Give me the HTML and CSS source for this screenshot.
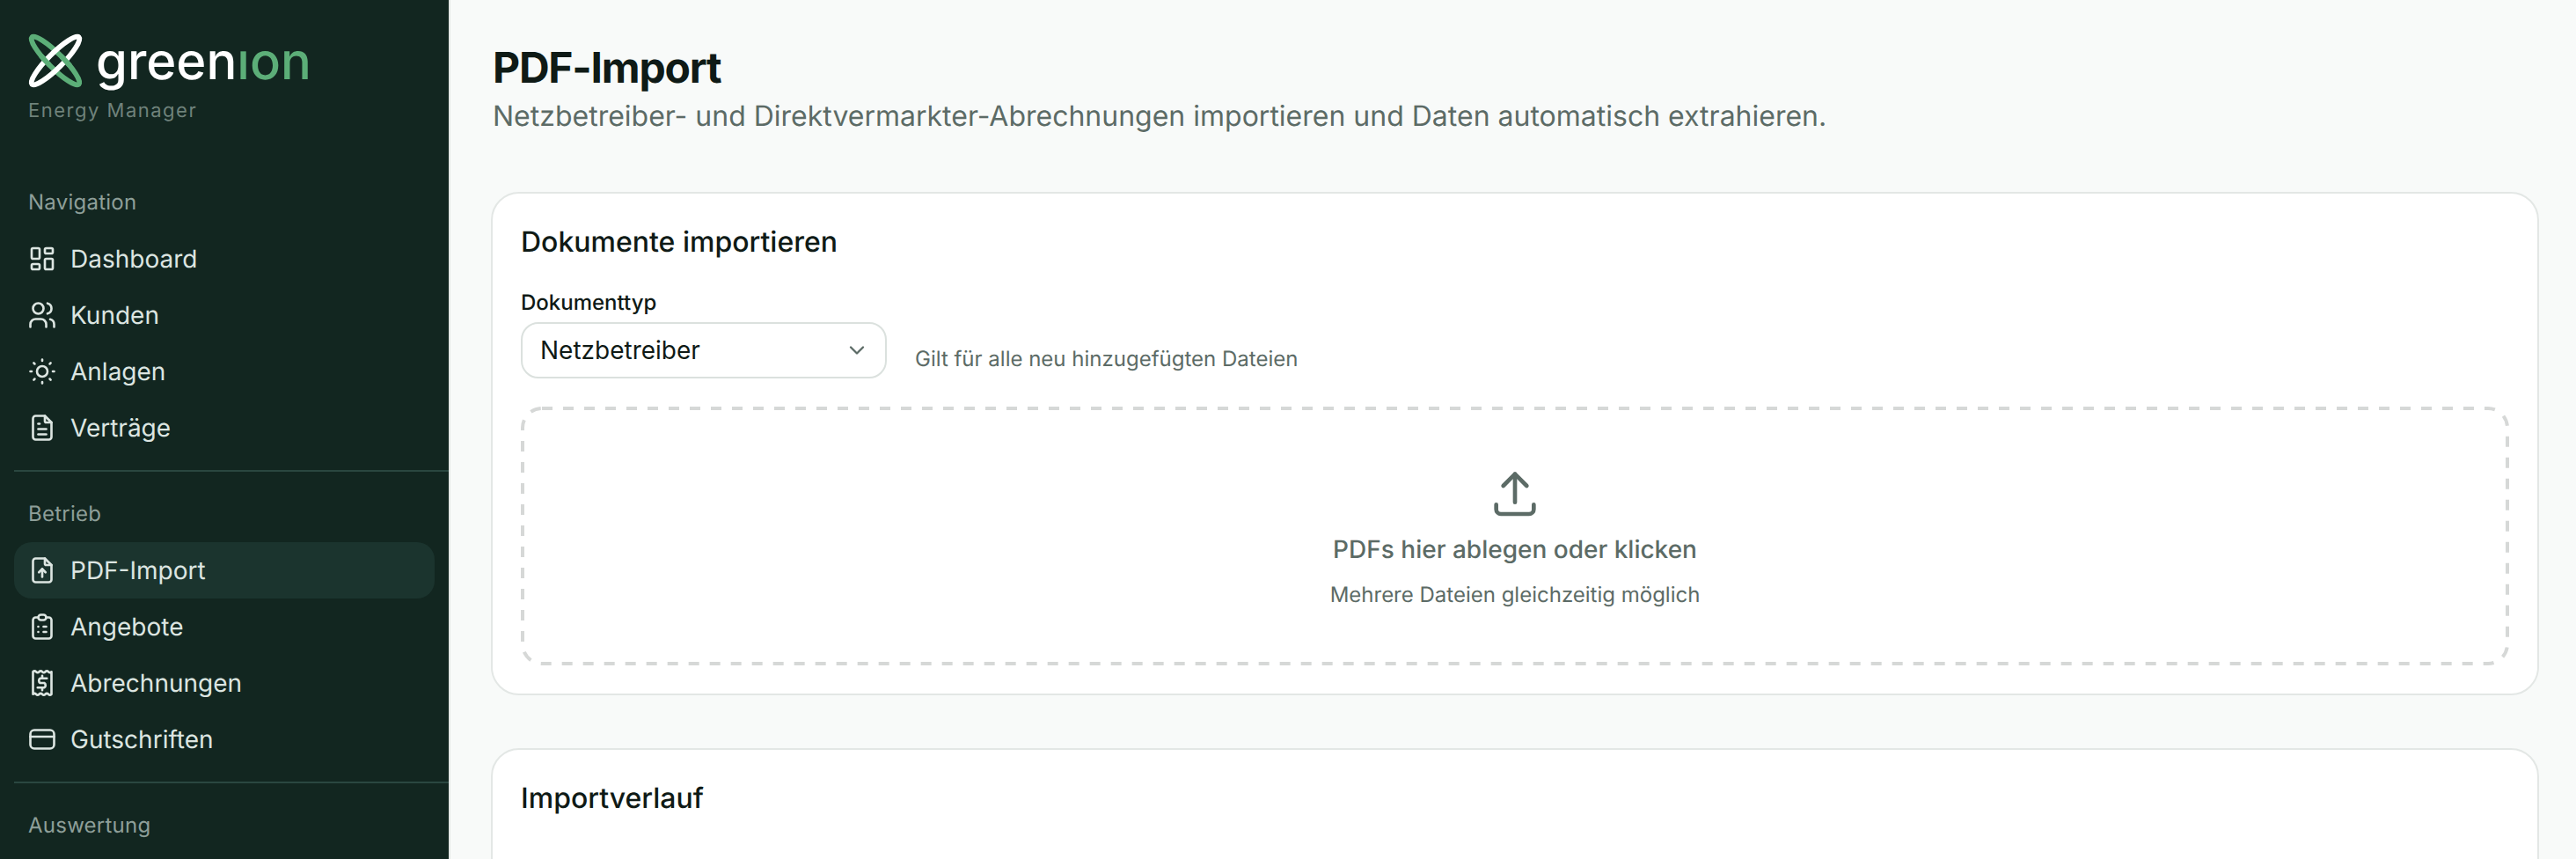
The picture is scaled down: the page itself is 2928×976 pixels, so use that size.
FILE: index.html
```html
<!DOCTYPE html>
<html lang="de">
<head>
<meta charset="utf-8">
<title>PDF-Import · greenion Energy Manager</title>
<link rel="stylesheet" href="styles.css">
</head>
<body>
<div class="app">
  <aside class="sidebar">
    <div class="brand">
      <div class="brand-row">
        <svg class="brand-mark" viewBox="0 0 64 64" fill="none" stroke-width="6">
          <defs>
            <clipPath id="weave"><rect x="12" y="24" width="15" height="16"/><rect x="37" y="24" width="15" height="16"/></clipPath>
          </defs>
          <ellipse cx="32" cy="32" rx="39" ry="8.500" transform="rotate(45 32 32)" stroke="#5cae78"/>
          <ellipse cx="32" cy="32" rx="39" ry="8.500" transform="rotate(-45 32 32)" stroke="#fff"/>
          <g clip-path="url(#weave)">
            <ellipse cx="32" cy="32" rx="39" ry="8.500" transform="rotate(45 32 32)" stroke="#5cae78"/>
          </g>
        </svg>
        <span class="brand-name">green<span class="brand-ion">ıon</span></span>
      </div>
      <div class="brand-sub">Energy Manager</div>
    </div>

    <p class="nav-label nav-label-first">Navigation</p>
    <nav class="nav-group">
      <a class="nav-item"><svg class="nav-icon" viewBox="0 0 24 24"><path d="M5 4h4a1 1 0 0 1 1 1v6a1 1 0 0 1-1 1H5a1 1 0 0 1-1-1V5a1 1 0 0 1 1-1"/><path d="M5 16h4a1 1 0 0 1 1 1v2a1 1 0 0 1-1 1H5a1 1 0 0 1-1-1v-2a1 1 0 0 1 1-1"/><path d="M15 12h4a1 1 0 0 1 1 1v6a1 1 0 0 1-1 1h-4a1 1 0 0 1-1-1v-6a1 1 0 0 1 1-1"/><path d="M15 4h4a1 1 0 0 1 1 1v2a1 1 0 0 1-1 1h-4a1 1 0 0 1-1-1V5a1 1 0 0 1 1-1"/></svg>Dashboard</a>
      <a class="nav-item"><svg class="nav-icon" viewBox="0 0 24 24"><path d="M9 7m-4 0a4 4 0 1 0 8 0a4 4 0 1 0-8 0"/><path d="M3 21v-2a4 4 0 0 1 4-4h4a4 4 0 0 1 4 4v2"/><path d="M16 3.130a4 4 0 0 1 0 7.750"/><path d="M21 21v-2a4 4 0 0 0-3-3.850"/></svg>Kunden</a>
      <a class="nav-item"><svg class="nav-icon" viewBox="0 0 24 24"><path d="M12 12m-4 0a4 4 0 1 0 8 0a4 4 0 1 0-8 0"/><path d="M3 12h1m8-9v1m8 8h1m-9 8v1m-6.400-15.400l.7.7m12.100-.7l-.7.7m0 11.400l.7.7m-12.100-.7l-.7.7"/></svg>Anlagen</a>
      <a class="nav-item"><svg class="nav-icon" viewBox="0 0 24 24"><path d="M14 3v4a1 1 0 0 0 1 1h4"/><path d="M17 21H7a2 2 0 0 1-2-2V5a2 2 0 0 1 2-2h7l5 5v11a2 2 0 0 1-2 2z"/><path d="M9 9h1"/><path d="M9 13h6"/><path d="M9 17h6"/></svg>Verträge</a>
    </nav>
    <div class="nav-divider"></div>

    <p class="nav-label">Betrieb</p>
    <nav class="nav-group">
      <a class="nav-item active"><svg class="nav-icon" viewBox="0 0 24 24"><path d="M14 3v4a1 1 0 0 0 1 1h4"/><path d="M17 21H7a2 2 0 0 1-2-2V5a2 2 0 0 1 2-2h7l5 5v11a2 2 0 0 1-2 2z"/><path d="M12 11v6"/><path d="M9.500 13.500L12 11l2.500 2.500"/></svg>PDF-Import</a>
      <a class="nav-item"><svg class="nav-icon" viewBox="0 0 24 24"><path d="M9 5H7a2 2 0 0 0-2 2v12a2 2 0 0 0 2 2h10a2 2 0 0 0 2-2V7a2 2 0 0 0-2-2h-2"/><path d="M9 5a2 2 0 0 1 2-2h2a2 2 0 0 1 2 2a2 2 0 0 1-2 2h-2a2 2 0 0 1-2-2z"/><path d="M9 12h.01"/><path d="M13 12h2"/><path d="M9 16h.01"/><path d="M13 16h2"/></svg>Angebote</a>
      <a class="nav-item"><svg class="nav-icon" viewBox="0 0 24 24"><path d="M5 3.500v17q1.170-1.200 2.330 0t2.330 0t2.340 0t2.340 0t2.330 0t2.330 0V3.500q-1.170 1.200-2.330 0t-2.330 0t-2.340 0t-2.340 0t-2.330 0t-2.330 0z"/><path d="M15.500 8.500h-5a2 2 0 0 0 0 3.500h3a2 2 0 0 1 0 3.500h-5"/><path d="M12 6.500v2m0 7v2"/></svg>Abrechnungen</a>
      <a class="nav-item"><svg class="nav-icon" viewBox="0 0 24 24"><path d="M3 8a3 3 0 0 1 3-3h12a3 3 0 0 1 3 3v8a3 3 0 0 1-3 3H6a3 3 0 0 1-3-3z"/><path d="M3 10h18"/></svg>Gutschriften</a>
    </nav>
    <div class="nav-divider"></div>

    <p class="nav-label">Auswertung</p>
  </aside>

  <main class="main">
    <h1 class="page-title">PDF-Import</h1>
    <p class="page-sub">Netzbetreiber- und Direktvermarkter-Abrechnungen importieren und Daten automatisch extrahieren.</p>

    <section class="card">
      <h2 class="card-title">Dokumente importieren</h2>
      <label class="field-label" for="doctype">Dokumenttyp</label>
      <div class="field-row">
        <div class="select-wrap">
          <select class="select" id="doctype">
            <option>Netzbetreiber</option>
            <option>Direktvermarkter</option>
          </select>
          <svg class="select-chevron" viewBox="0 0 24 24"><path d="M6 9l6 6l6-6"/></svg>
        </div>
        <span class="field-hint">Gilt für alle neu hinzugefügten Dateien</span>
      </div>
      <div class="dropzone">
        <svg class="dropzone-border"><rect class="dropzone-rect" rx="22" ry="22"/></svg>
        <svg class="dropzone-icon" viewBox="0 0 24 24"><path d="M4 17v2a2 2 0 0 0 2 2h12a2 2 0 0 0 2-2v-2"/><path d="M7 9l5-5l5 5"/><path d="M12 4v12"/></svg>
        <div class="dropzone-title">PDFs hier ablegen oder klicken</div>
        <div class="dropzone-sub">Mehrere Dateien gleichzeitig möglich</div>
      </div>
    </section>

    <section class="card card-history">
      <h2 class="card-title">Importverlauf</h2>
    </section>
  </main>
</div>
</body>
</html>
```

FILE: styles.css
```css
:root{
  --side:#122620; --side-active:#1b342e; --side-line:#2a4740;
  --side-text:#dce5e1; --side-muted:#8e9f99;
  --green:#5cae78; --page:#f8faf9; --line:#e3e7e5;
  --ink:#0f1a16; --muted:#5c6b66;
}
*{box-sizing:border-box;}
html,body{margin:0;padding:0;height:100%;overflow:hidden;}
body{font-family:'Inter',sans-serif;background:var(--page);color:var(--ink);text-rendering:geometricPrecision;}
.app{display:flex;height:976px;overflow:hidden;}

/* sidebar */
.sidebar{width:512px;flex-shrink:0;background:var(--side);border-right:2px solid var(--line);padding:38px 0 0 16px;}
.brand{padding-left:16px;}
.brand-row{display:flex;align-items:center;gap:15px;height:62px;}
.brand-mark{width:62px;height:62px;flex-shrink:0;overflow:visible;}
.brand-name{font-size:58px;font-weight:500;line-height:62px;color:#fff;}
.brand-ion{color:var(--green);}
.brand-sub{font-size:22px;line-height:28px;color:#6f827b;letter-spacing:1.5px;margin-top:12px;}

.nav-label{margin:0 0 0 16px;font-size:24px;line-height:32px;letter-spacing:.24px;color:var(--side-muted);padding:32px 0 16px;}
.nav-label-first{padding-top:74px;}
.nav-group{display:flex;flex-direction:column;margin-right:16px;}
.nav-item{display:flex;align-items:center;gap:14px;height:64px;padding-left:14px;border-radius:20px;font-size:28px;color:var(--side-text);}
.nav-item.active{background:var(--side-active);}
.nav-icon{width:36px;height:36px;flex-shrink:0;fill:none;stroke:currentColor;stroke-width:1.75;stroke-linecap:round;stroke-linejoin:round;}
.nav-divider{height:2px;background:var(--side-line);margin-top:16px;}

/* main */
.main{flex:1;min-width:0;padding:46px 42px 0 46px;}
.page-title{margin:0;font-size:48px;line-height:62px;font-weight:700;letter-spacing:-1.2px;color:var(--ink);padding-left:2px;}
.page-sub{margin:2px 0 0;font-size:32px;line-height:44px;color:var(--muted);padding-left:2px;}

.card{background:#fff;border:2px solid var(--line);border-radius:32px;padding:32px;margin-top:64px;}
.card + .card{margin-top:60px;}
.card-history{min-height:400px;}
.card-title{margin:0;font-size:32px;line-height:46px;font-weight:500;color:var(--ink);}
.field-label{display:block;margin-top:28px;font-size:24px;line-height:36px;font-weight:500;color:var(--ink);}
.field-row{display:flex;align-items:flex-end;gap:32px;margin-top:4px;}
.select-wrap{position:relative;width:416px;height:64px;}
.select{appearance:none;width:100%;height:100%;background:#fff;border:2px solid #dbe1de;border-radius:20px;padding:0 20px;font-family:inherit;font-size:28px;color:var(--ink);}
.select-chevron{position:absolute;right:20px;top:18px;width:28px;height:28px;fill:none;stroke:var(--muted);stroke-width:2;stroke-linecap:round;stroke-linejoin:round;}
.field-hint{font-size:24px;line-height:36px;color:var(--muted);margin-bottom:4px;}

.dropzone{position:relative;display:flex;flex-direction:column;align-items:center;height:294px;margin-top:32px;padding-top:66px;}
.dropzone-border{position:absolute;inset:0;width:100%;height:100%;fill:none;}
.dropzone-rect{x:2px;y:2px;width:calc(100% - 4px);height:calc(100% - 4px);stroke:#d6d8d7;stroke-width:4;stroke-dasharray:12 12;}
.dropzone-icon{width:64px;height:64px;fill:none;stroke:var(--muted);stroke-width:1.75;stroke-linecap:round;stroke-linejoin:round;}
.dropzone-title{margin-top:12px;font-size:28px;line-height:40px;font-weight:500;color:var(--muted);}
.dropzone-sub{margin-top:14px;font-size:24px;line-height:36px;color:var(--muted);}
```
